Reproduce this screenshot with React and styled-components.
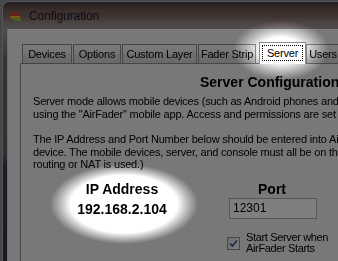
import React from 'react';
import styled, { createGlobalStyle, css } from 'styled-components';

const GlobalStyle = createGlobalStyle`
  html, body {
    margin: 0;
    padding: 0;
  }
  body {
    width: 338px;
    height: 261px;
    overflow: hidden;
    font-family: "Liberation Sans", Arial, sans-serif;
  }
`;

const Screen = styled.div`
  position: relative;
  width: 338px;
  height: 261px;
  overflow: hidden;
  display: flex;
  background: #8a9096;
`;

const Window = styled.div`
  flex: 1;
  margin: 1px -20px 0 2px;
  display: flex;
  flex-direction: column;
  border-top-left-radius: 7px;
  border-left: 1px solid #a8acb2;
  border-top: 1px solid #a8acb2;
  background: linear-gradient(
    to bottom,
    #484040 0px,
    #5a4a48 4px,
    #7a5e58 9px,
    #80645e 14px,
    #988a88 21px,
    #9c9a9a 28px,
    #62666e 60px,
    #5c6068 150px,
    #343a42 165px,
    #30363e 261px
  );
`;

const TitleBar = styled.div`
  height: 27px;
  display: flex;
  align-items: center;
  gap: 7px;
  padding-left: 5px;
  flex-shrink: 0;
`;

const Title = styled.span`
  font-size: 12px;
  color: #141a30;
  letter-spacing: -0.1px;
`;

const Body = styled.div`
  flex: 1;
  display: flex;
  min-height: 0;
`;

const SideFrame = styled.div`
  width: 4px;
  flex-shrink: 0;
`;

const Client = styled.div`
  flex: 1;
  display: flex;
  flex-direction: column;
  padding: 12px 0 0 12px;
  background: #f0f0f0;
  border-top: 1px solid #ffffff;
  border-left: 1px solid #d8d8d8;
`;

const TabStrip = styled.div`
  display: flex;
  align-items: flex-end;
  height: 21px;
  padding-left: 2px;
  gap: 1px;
  flex-shrink: 0;
`;

const Tab = styled.div`
  box-sizing: border-box;
  width: ${({ $w }) => $w}px;
  flex-shrink: 0;
  height: 19px;
  border: 1px solid #898c95;
  border-bottom: none;
  background: linear-gradient(to bottom, #f4f4f4, #e8e8e8 50%, #dcdcdc 51%, #d4d4d4);
  font-size: 11px;
  letter-spacing: -0.2px;
  color: #000;
  display: flex;
  align-items: center;
  justify-content: center;
  white-space: nowrap;
  ${({ $ml }) => $ml !== undefined && css`margin-left: ${$ml}px;`}
  ${({ $selected }) =>
    $selected &&
    css`
      position: relative;
      z-index: 1;
      height: 22px;
      margin-bottom: -1px;
      background: #ffffff;
      padding-bottom: 1px;
    `}
`;

const FocusBox = styled.span`
  border: 1px dotted #000;
  padding: 1px 4px;
  line-height: 12px;
`;

const Panel = styled.div`
  flex: 1;
  border-top: 1px solid #898c95;
  border-left: 1px solid #898c95;
  background: #f0f0f0;
  padding: 10px 0 0 12px;
  color: #000;
`;

const Heading = styled.div`
  margin-left: 167px;
  font-size: 14px;
  line-height: 16px;
  font-weight: bold;
  white-space: nowrap;
`;

const Para = styled.p`
  margin: ${({ $mt }) => $mt}px 0 0;
  font-size: 11px;
  line-height: 12.5px;
  letter-spacing: -0.2px;
  white-space: nowrap;
`;

const Fields = styled.div`
  display: flex;
  margin-top: 10px;
  margin-left: 14px;
  gap: 30px;
`;

const IpColumn = styled.div`
  width: 150px;
  display: flex;
  flex-direction: column;
  align-items: center;
  gap: 4px;
`;

const PortColumn = styled.div`
  width: 90px;
  display: flex;
  flex-direction: column;
`;

const BigLabel = styled.div`
  font-size: 14px;
  line-height: 16px;
  font-weight: bold;
  text-align: center;
  white-space: nowrap;
`;

const TextBox = styled.div`
  box-sizing: border-box;
  margin: 1px 0 0 2px;
  width: 88px;
  height: 21px;
  border: 1px solid #abadb3;
  background: #ffffff;
  padding-left: 3px;
  font-size: 12px;
  line-height: 19px;
`;

const CheckRow = styled.label`
  margin-top: 13px;
  display: flex;
  align-items: center;
  gap: 6px;
`;

const CheckBox = styled.span`
  box-sizing: border-box;
  width: 13px;
  height: 13px;
  flex-shrink: 0;
  border: 1px solid #8e8f8f;
  background: linear-gradient(135deg, #dcdcdc, #fbfbfb);
  display: flex;
  align-items: center;
  justify-content: center;
`;

const CheckText = styled.span`
  font-size: 11px;
  line-height: 11.5px;
  letter-spacing: -0.35px;
  white-space: nowrap;
`;

const Glow = styled.div`
  position: absolute;
  inset: 0;
  pointer-events: none;
  mix-blend-mode: color-dodge;
  background:
    radial-gradient(46px 28px at 281px 50px, #121212 40%, #000 100%),
    radial-gradient(74px 40px at 124px 204px, #121212 70%, #000 100%);
  background-blend-mode: lighten;
`;

const Dim = styled.div`
  position: absolute;
  inset: 0;
  pointer-events: none;
  background: rgba(0, 0, 0, 0.5);
  -webkit-mask-image:
    radial-gradient(48px 30px at 281px 50px, transparent 42%, #000 100%),
    radial-gradient(74px 40px at 124px 204px, transparent 72%, #000 100%);
  -webkit-mask-composite: source-in;
  mask-image:
    radial-gradient(48px 30px at 281px 50px, transparent 42%, #000 100%),
    radial-gradient(74px 40px at 124px 204px, transparent 72%, #000 100%);
  mask-composite: intersect;
`;

const AppIcon = () => (
  <svg width="14" height="14" viewBox="0 0 14 14">
    <path d="M3 7 A4 4 0 0 1 11 7 Z" fill="#d43c2a" />
    <rect x="2" y="7" width="10" height="2" fill="#e8b830" />
    <path d="M2.5 9.5 Q8 13.5 13.5 11.5 L12.5 9.5 Z" fill="#9cbf3c" />
  </svg>
);

const tabs = [
  { label: 'Devices', w: 50 },
  { label: 'Options', w: 48 },
  { label: 'Custom Layer', w: 75 },
  { label: 'Fader Strip', w: 58 },
  { label: 'Server', w: 47, selected: true, ml: 2 },
  { label: 'Users', w: 34, ml: -1 },
];

const App = () => (
  <>
    <GlobalStyle />
    <Screen>
      <Window>
        <TitleBar>
          <AppIcon />
          <Title>Configuration</Title>
        </TitleBar>
        <Body>
          <SideFrame />
          <Client>
            <TabStrip>
              {tabs.map((t) => (
                <Tab key={t.label} $w={t.w} $ml={t.ml} $selected={t.selected}>
                  {t.selected ? <FocusBox>{t.label}</FocusBox> : t.label}
                </Tab>
              ))}
            </TabStrip>
            <Panel>
              <Heading>Server Configuration</Heading>
              <Para $mt={5}>
                Server mode allows mobile devices (such as Android phones and tablets)
                <br />
                using the "AirFader" mobile app. Access and permissions are set
              </Para>
              <Para $mt={13}>
                The IP Address and Port Number below should be entered into AirFader
                <br />
                device. The mobile devices, server, and console must all be on the
                <br />
                routing or NAT is used.)
              </Para>
              <Fields>
                <IpColumn>
                  <BigLabel>IP Address</BigLabel>
                  <BigLabel>192.168.2.104</BigLabel>
                </IpColumn>
                <PortColumn>
                  <BigLabel>Port</BigLabel>
                  <TextBox>12301</TextBox>
                  <CheckRow>
                    <CheckBox>
                      <svg width="9" height="9" viewBox="0 0 9 9">
                        <path d="M1 4.5 L3.5 7 L8 1.5" fill="none" stroke="#4a5f95" strokeWidth="1.8" />
                      </svg>
                    </CheckBox>
                    <CheckText>
                      Start Server when
                      <br />
                      AirFader Starts
                    </CheckText>
                  </CheckRow>
                </PortColumn>
              </Fields>
            </Panel>
          </Client>
        </Body>
      </Window>
      <Glow />
      <Dim />
    </Screen>
  </>
);

export default App;
